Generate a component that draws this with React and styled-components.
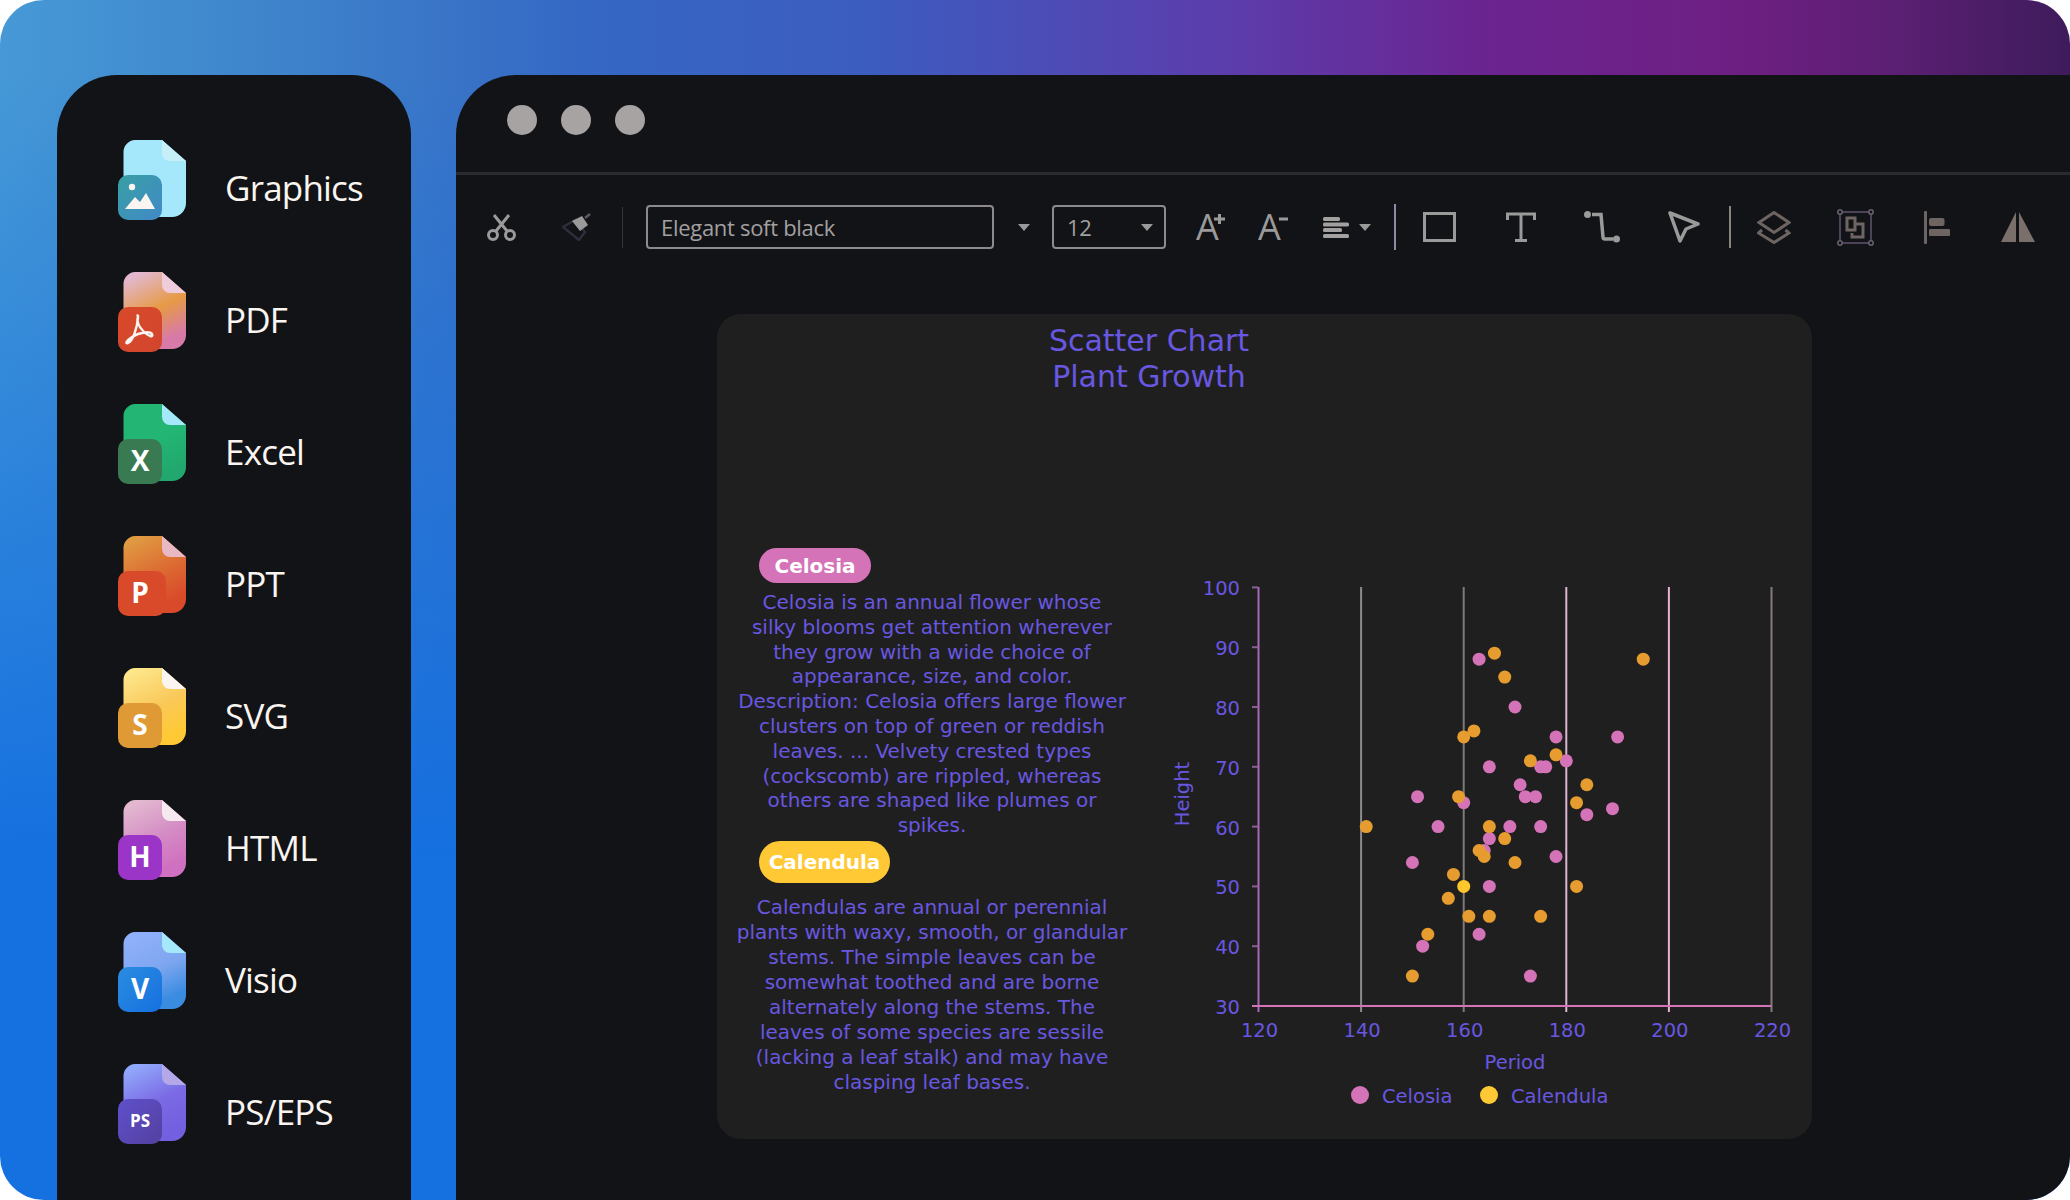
import React from 'react';
import styled, { createGlobalStyle } from 'styled-components';

const GlobalStyle = createGlobalStyle`
  html, body {
    margin: 0;
    padding: 0;
    background: #fff;
  }
`;

const Frame = styled.div`
  width: 2070px;
  height: 1200px;
  box-sizing: border-box;
  padding: 75px 0 0 57px;
  display: flex;
  gap: 45px;
  overflow: hidden;
  border-radius: 44px;
  background:
    linear-gradient(180deg, rgba(21, 112, 224, 0) 6%, #1570e0 72%),
    linear-gradient(90deg, #4699d6 0, #3f86cc 12%, #3568c4 28%, #3c5cc0 42%, #5a3fae 58%, #6b2490 72%, #6e1f82 84%, #5a1f72 92%, #3e1b5c 100%);
`;

const Sidebar = styled.nav`
  width: 354px;
  flex: none;
  box-sizing: border-box;
  padding: 65px 0 0 61px;
  background: #121316;
  border-radius: 60px 60px 0 0;
`;

const FormatRow = styled.div`
  height: 132px;
  display: flex;
  align-items: flex-start;
  gap: 39px;
`;

const FormatLabel = styled.span`
  font-family: "Open Sans", sans-serif;
  font-size: 35px;
  line-height: 48px;
  letter-spacing: -0.8px;
  color: #faf5f0;
  padding-top: 24px;
`;

const IconText = styled.text`
  font-family: "Open Sans", sans-serif;
  font-weight: 700;
  fill: #fff;
  text-anchor: middle;
`;

const Panel = styled.main`
  flex: 1;
  background: #121316;
  border-radius: 60px 0 0 0;
`;

const TitleBar = styled.div`
  height: 100px;
  box-sizing: border-box;
  padding: 0 0 7px 51px;
  display: flex;
  align-items: center;
  gap: 24px;
  border-bottom: 3px solid #2a2b30;
`;

const Dot = styled.span`
  width: 30px;
  height: 30px;
  border-radius: 50%;
  background: #a8a3a3;
`;

const Toolbar = styled.div`
  height: 104px;
  box-sizing: border-box;
  padding-left: 30px;
  display: flex;
  align-items: center;
`;

const Tool = styled.svg`
  flex: none;
  margin-left: ${(p) => p.$ml || 0}px;
  display: block;
`;

const LetterGlyph = styled.text`
  font-family: "Open Sans", sans-serif;
  font-size: 36px;
  fill: #9a9a9a;
`;

const Separator = styled.span`
  flex: none;
  width: ${(p) => p.$w || 1}px;
  height: ${(p) => p.$h}px;
  margin-left: ${(p) => p.$ml}px;
  background: ${(p) => p.$color};
`;

const Field = styled.div`
  flex: none;
  width: ${(p) => p.$w}px;
  height: 44px;
  box-sizing: border-box;
  margin-left: ${(p) => p.$ml}px;
  padding: 0 11px 0 13px;
  display: flex;
  align-items: center;
  justify-content: space-between;
  border: 2px solid #8d8a8c;
  border-radius: 4px;
  font-family: "Open Sans", sans-serif;
  font-size: 22px;
  letter-spacing: -0.3px;
  color: #a3a0a0;
`;

const Caret = styled.span`
  flex: none;
  width: 0;
  height: 0;
  margin-left: ${(p) => p.$ml || 0}px;
  border-left: 6px solid transparent;
  border-right: 6px solid transparent;
  border-top: 7px solid #9a9a9a;
`;

const Canvas = styled.div`
  padding: 35px 0 0 261px;
`;

const Card = styled.section`
  width: 1095px;
  height: 825px;
  box-sizing: border-box;
  padding: 9px 0 0 15px;
  background: #1f1f1f;
  border-radius: 24px;
  font-family: "DejaVu Sans", Verdana, sans-serif;
  color: #6857e0;
`;

const ChartTitle = styled.h1`
  margin: 0;
  width: 834px;
  font-size: 30px;
  line-height: 36px;
  font-weight: 400;
  text-align: center;
`;

const CardBody = styled.div`
  display: flex;
  align-items: flex-start;
  gap: 18px;
`;

const Notes = styled.div`
  width: 400px;
  flex: none;
  margin-top: 153px;
`;

const Pill = styled.div`
  width: ${(p) => p.$w}px;
  height: ${(p) => p.$h}px;
  margin-left: 27px;
  display: flex;
  align-items: center;
  justify-content: center;
  border-radius: 22px;
  background: ${(p) => p.$color};
  color: #fff;
  font-size: 20px;
  font-weight: 700;
`;

const Note = styled.p`
  margin: ${(p) => p.$top}px 0 ${(p) => p.$bottom}px;
  font-size: 20px;
  line-height: ${(p) => p.$lh}px;
  text-align: center;
  white-space: pre-line;
`;

const ChartSvg = styled.svg`
  flex: none;
  margin-top: 164px;
  display: block;
`;

const ChartLabel = styled.text`
  font-family: "DejaVu Sans", Verdana, sans-serif;
  font-size: 19.5px;
  fill: #6857e0;
`;

const formats = [
  { name: 'Graphics', back: ['#a6e8fb', '#a6e8fb', '#a6e8fb'], fold: '#c6eff8', front: ['#38a0a4', '#4189c8'], art: 'image' },
  { name: 'PDF', back: ['#e2b8d0', '#e69a45', '#d87aa8'], fold: '#efccdc', front: ['#d94a2a', '#d2452e'], art: 'acrobat' },
  { name: 'Excel', back: ['#22b573', '#22b573', '#22a86e'], fold: '#a6e8fb', front: ['#3a7a52', '#3a7a52'], letter: 'X' },
  { name: 'PPT', back: ['#e09a42', '#dc6a32', '#d94a2a'], fold: '#e8b8c4', front: ['#d94a2a', '#d94a2a'], letter: 'P', wide: true },
  { name: 'SVG', back: ['#fde68a', '#f9c95a', '#ffc935'], fold: '#faf5f0', front: ['#e09a35', '#e09a35'], letter: 'S' },
  { name: 'HTML', back: ['#e2b8d0', '#d48cc4', '#d070c0'], fold: '#f5e8ee', front: ['#9b35c8', '#9b35c8'], letter: 'H' },
  { name: 'Visio', back: ['#90b0fb', '#7ea6f0', '#3a8ce0'], fold: '#a6e8fb', front: ['#2c8ce0', '#1570e0'], letter: 'V' },
  { name: 'PS/EPS', back: ['#90a8fb', '#7b6ae4', '#7260e0'], fold: '#b4a8e8', front: ['#5f50cc', '#54409f'], letter: 'PS', small: true },
];

function FileIcon({ id, back, fold, front, letter, art, wide, small }) {
  return (
    <svg width="68" height="80" viewBox="0 0 68 80" style={{ flex: 'none' }}>
      <defs>
        <linearGradient id={`back-${id}`} x1="0" y1="0" x2="0.4" y2="1">
          <stop offset="0.1" stopColor={back[0]} />
          <stop offset="0.6" stopColor={back[1]} />
          <stop offset="1" stopColor={back[2]} />
        </linearGradient>
        <linearGradient id={`front-${id}`} x1="0" y1="0" x2="1" y2="1">
          <stop offset="0" stopColor={front[0]} />
          <stop offset="1" stopColor={front[1]} />
        </linearGradient>
      </defs>
      <path d="M17 0 H44 L68 21 V63 a14 14 0 0 1 -14 14 H5.5 V12 a12 12 0 0 1 11.5 -12Z" fill={`url(#back-${id})`} />
      <path d="M44 0 L68 21 H52 a8 8 0 0 1 -8 -8Z" fill={fold} />
      <rect x="0" y="35" width={wide ? 48 : 44} height="45" rx="10" fill={`url(#front-${id})`} />
      {letter && (
        <IconText x="22" y={small ? 63 : 67} fontSize={small ? 17 : 28}>
          {letter}
        </IconText>
      )}
      {art === 'image' && (
        <g fill="#faf5f0">
          <circle cx="14" cy="47" r="3.2" />
          <path d="M7 69 L17 57 L22 62 L28 53 L37 69Z" />
        </g>
      )}
      {art === 'acrobat' && (
        <path
          d="M20 44 C18 50 22 56 26 60 C30 64 36 66 34 62 C32 59 22 60 14 65 C8 69 7 72 10 71 C15 69 19 56 20 46 C20 43 19 43 20 44Z"
          fill="none"
          stroke="#faf5f0"
          strokeWidth="2.4"
        />
      )}
    </svg>
  );
}

const celosia = `Celosia is an annual flower whose
silky blooms get attention wherever
they grow with a wide choice of
appearance, size, and color.
Description: Celosia offers large flower
clusters on top of green or reddish
leaves. ... Velvety crested types
(cockscomb) are rippled, whereas
others are shaped like plumes or
spikes.`;

const calendula = `Calendulas are annual or perennial
plants with waxy, smooth, or glandular
stems. The simple leaves can be
somewhat toothed and are borne
alternately along the stems. The
leaves of some species are sessile
(lacking a leaf stalk) and may have
clasping leaf bases.`;

const pinkPoints = [
  [163, 88], [170, 80], [178, 75], [190, 75], [165, 70], [175, 70], [176, 70], [180, 71],
  [171, 67], [172, 65], [174, 65], [151, 65], [160, 64], [189, 63], [184, 62], [155, 60],
  [169, 60], [175, 60], [165, 58], [164, 56], [178, 55], [150, 54], [165, 50], [152, 40],
  [163, 42], [173, 35],
];

const orangePoints = [
  [166, 89], [168, 85], [195, 88], [162, 76], [160, 75], [173, 71], [178, 72], [184, 67],
  [159, 65], [182, 64], [141, 60], [165, 60], [168, 58], [164, 55], [163, 56], [170, 54],
  [158, 52], [182, 50], [157, 48], [161, 45], [165, 45], [175, 45], [153, 42], [150, 35],
];

const px = (v) => 1258.5 + (v - 120) * 5.13;
const py = (v) => 1007 - (v - 30) * 5.98;

const grid = [
  [140, '#8c8c8c'],
  [160, '#7d7a78'],
  [180, '#dcb7d2'],
  [200, '#e8b2d4'],
  [220, '#85797a'],
];

function ScatterChart() {
  return (
    <ChartSvg width="650" height="560" viewBox="1150 560 650 560">
      {grid.map(([v, color]) => (
        <line key={v} x1={px(v)} x2={px(v)} y1="588" y2="1013" stroke={color} strokeWidth="2" />
      ))}
      <line x1={px(120)} x2={px(120)} y1="588" y2="1013" stroke="#a868b8" strokeWidth="2" />
      <line x1="1252" x2={px(220)} y1={py(30)} y2={py(30)} stroke="#d473b8" strokeWidth="2" />
      {[40, 50, 60, 70, 80, 90, 100].map((v) => (
        <line key={v} x1="1252" x2="1258" y1={py(v)} y2={py(v)} stroke="#8a5f96" strokeWidth="2" />
      ))}
      {[30, 40, 50, 60, 70, 80, 90, 100].map((v) => (
        <ChartLabel key={v} x="1240" y={py(v) + 8} textAnchor="end">{v}</ChartLabel>
      ))}
      {[120, 140, 160, 180, 200, 220].map((v) => (
        <ChartLabel key={v} x={px(v) + 1} y="1038" textAnchor="middle">{v}</ChartLabel>
      ))}
      <ChartLabel x="1515" y="1070" textAnchor="middle">Period</ChartLabel>
      <ChartLabel x="1189" y="795" textAnchor="middle" transform="rotate(-90 1189 795)">Height</ChartLabel>
      {pinkPoints.map(([x, y]) => (
        <circle key={`p${x}-${y}`} cx={px(x)} cy={py(y)} r="6.5" fill="#d473b8" />
      ))}
      {orangePoints.map(([x, y]) => (
        <circle key={`o${x}-${y}`} cx={px(x)} cy={py(y)} r="6.5" fill="#e69c2e" />
      ))}
      <circle cx={px(160)} cy={py(50)} r="6.5" fill="#ffc72c" />
      <circle cx="1360" cy="1096" r="9" fill="#d473b8" />
      <ChartLabel x="1382" y="1104">Celosia</ChartLabel>
      <circle cx="1489" cy="1096" r="9" fill="#ffc935" />
      <ChartLabel x="1511" y="1104">Calendula</ChartLabel>
    </ChartSvg>
  );
}

export default function App() {
  return (
    <>
      <GlobalStyle />
      <Frame>
        <Sidebar>
          {formats.map((f, i) => (
            <FormatRow key={f.name}>
              <FileIcon id={i} {...f} />
              <FormatLabel>{f.name}</FormatLabel>
            </FormatRow>
          ))}
        </Sidebar>
        <Panel>
          <TitleBar>
            <Dot />
            <Dot />
            <Dot />
          </TitleBar>
          <Toolbar>
            <Tool width="31" height="27" viewBox="0 0 31 27" fill="none" stroke="#9a9a9a" strokeWidth="3">
              <circle cx="7" cy="21" r="4.5" />
              <circle cx="24" cy="21" r="4.5" />
              <path d="M10 17 L23 1 M21 17 L8 1" />
            </Tool>
            <Tool $ml={45} width="30" height="28" viewBox="0 0 30 28" fill="none">
              <path d="M1 14 L13 7 L23 19 L17 27Z" stroke="#2f2c3c" strokeWidth="2.5" />
              <path d="M10 8 L20 3 L26 12 L18 18Z" fill="#9a9a9a" />
              <path d="M23 5 L28 1" stroke="#5c5866" strokeWidth="2.5" />
            </Tool>
            <Separator $ml={30} $h={41} $color="#3a3534" />
            <Field $ml={23} $w={348}>Elegant soft black</Field>
            <Caret $ml={24} />
            <Field $ml={22} $w={114}>
              12
              <Caret />
            </Field>
            <Tool $ml={30} width="29" height="56" viewBox="0 0 29 56">
              <LetterGlyph x="0" y="41">A</LetterGlyph>
              <path d="M18 20 H29 M23.5 15 V25" stroke="#9a9a9a" strokeWidth="3" />
            </Tool>
            <Tool $ml={33} width="30" height="56" viewBox="0 0 30 56">
              <LetterGlyph x="0" y="41">A</LetterGlyph>
              <path d="M21 20 H30" stroke="#9a9a9a" strokeWidth="3" />
            </Tool>
            <Tool $ml={35} width="26" height="21" viewBox="0 0 26 21" fill="#a3a0a0">
              <rect y="0" width="17" height="4" rx="1.5" />
              <rect y="5.5" width="26" height="4" rx="1.5" />
              <rect y="11" width="19" height="4" rx="1.5" />
              <rect y="17" width="26" height="4" rx="1.5" />
            </Tool>
            <Caret $ml={10} />
            <Separator $ml={23} $w={2} $h={46} $color="#8e8aa6" />
            <Tool $ml={27} width="33" height="30" viewBox="0 0 33 30" fill="none" stroke="#9a9a9a" strokeWidth="3">
              <rect x="1.5" y="1.5" width="30" height="27" />
            </Tool>
            <Tool $ml={50} width="30" height="30" viewBox="0 0 30 30" fill="none" stroke="#9a9a9a" strokeWidth="3">
              <path d="M1.5 8 V2 H28.5 V8 M15 2 V28 M9 28.5 H21" />
            </Tool>
            <Tool $ml={48} width="36" height="32" viewBox="0 0 36 32" fill="none">
              <circle cx="3.5" cy="3.5" r="3.5" fill="#9a9a9a" />
              <path d="M8 3.5 H17 L19 26 Q19 28 21 28 H29" stroke="#9a9a9a" strokeWidth="3.5" />
              <circle cx="32.5" cy="28" r="3.5" fill="#9a9a9a" />
            </Tool>
            <Tool $ml={48} width="32" height="32" viewBox="0 0 32 32" fill="none" stroke="#9a9a9a" strokeWidth="3.5" strokeLinejoin="round">
              <path d="M2 2 L30 13 L18 18 L12 30Z" />
            </Tool>
            <Separator $ml={29} $w={2} $h={42} $color="#8b8580" />
            <Tool $ml={26} width="34" height="33" viewBox="0 0 34 33" fill="none" stroke="#6e6462" strokeWidth="3">
              <path d="M17 1.5 L32 11.5 L17 21.5 L2 11.5Z" />
              <path d="M5 19 L1.5 22 L17 31.5 L32 22 L28.5 19" />
            </Tool>
            <Tool $ml={46} width="37" height="37" viewBox="0 0 37 37" fill="none">
              <rect x="3" y="3" width="31" height="31" stroke="#4b4458" strokeWidth="2" />
              <g fill="#121316" stroke="#6a6070" strokeWidth="1.5">
                <circle cx="3" cy="3" r="2.2" />
                <circle cx="34" cy="3" r="2.2" />
                <circle cx="3" cy="34" r="2.2" />
                <circle cx="34" cy="34" r="2.2" />
              </g>
              <path d="M10 9 H18 V21 H10Z M18 15 H26 V28 H15 V24" stroke="#6e6462" strokeWidth="3" />
            </Tool>
            <Tool $ml={50} width="26" height="33" viewBox="0 0 26 33" fill="#6e6462">
              <rect x="0" width="3" height="33" rx="1" />
              <rect x="5" y="7" width="15.5" height="8" rx="2" />
              <rect x="5" y="18" width="21" height="7" rx="1" />
            </Tool>
            <Tool $ml={51} width="34" height="30" viewBox="0 0 34 30" fill="#7a6f6a">
              <path d="M0 30 L15 0 V30Z M18 0 L34 30 H18Z" />
            </Tool>
          </Toolbar>
          <Canvas>
            <Card>
              <ChartTitle>
                Scatter Chart
                <br />
                Plant Growth
              </ChartTitle>
              <CardBody>
                <Notes>
                  <Pill $w={112} $h={35} $color="#d473b8">Celosia</Pill>
                  <Note $top={7} $bottom={3} $lh={24.8}>{celosia}</Note>
                  <Pill $w={131} $h={42} $color="#ffc935">Calendula</Pill>
                  <Note $top={12} $bottom={0} $lh={25}>{calendula}</Note>
                </Notes>
                <ScatterChart />
              </CardBody>
            </Card>
          </Canvas>
        </Panel>
      </Frame>
    </>
  );
}
